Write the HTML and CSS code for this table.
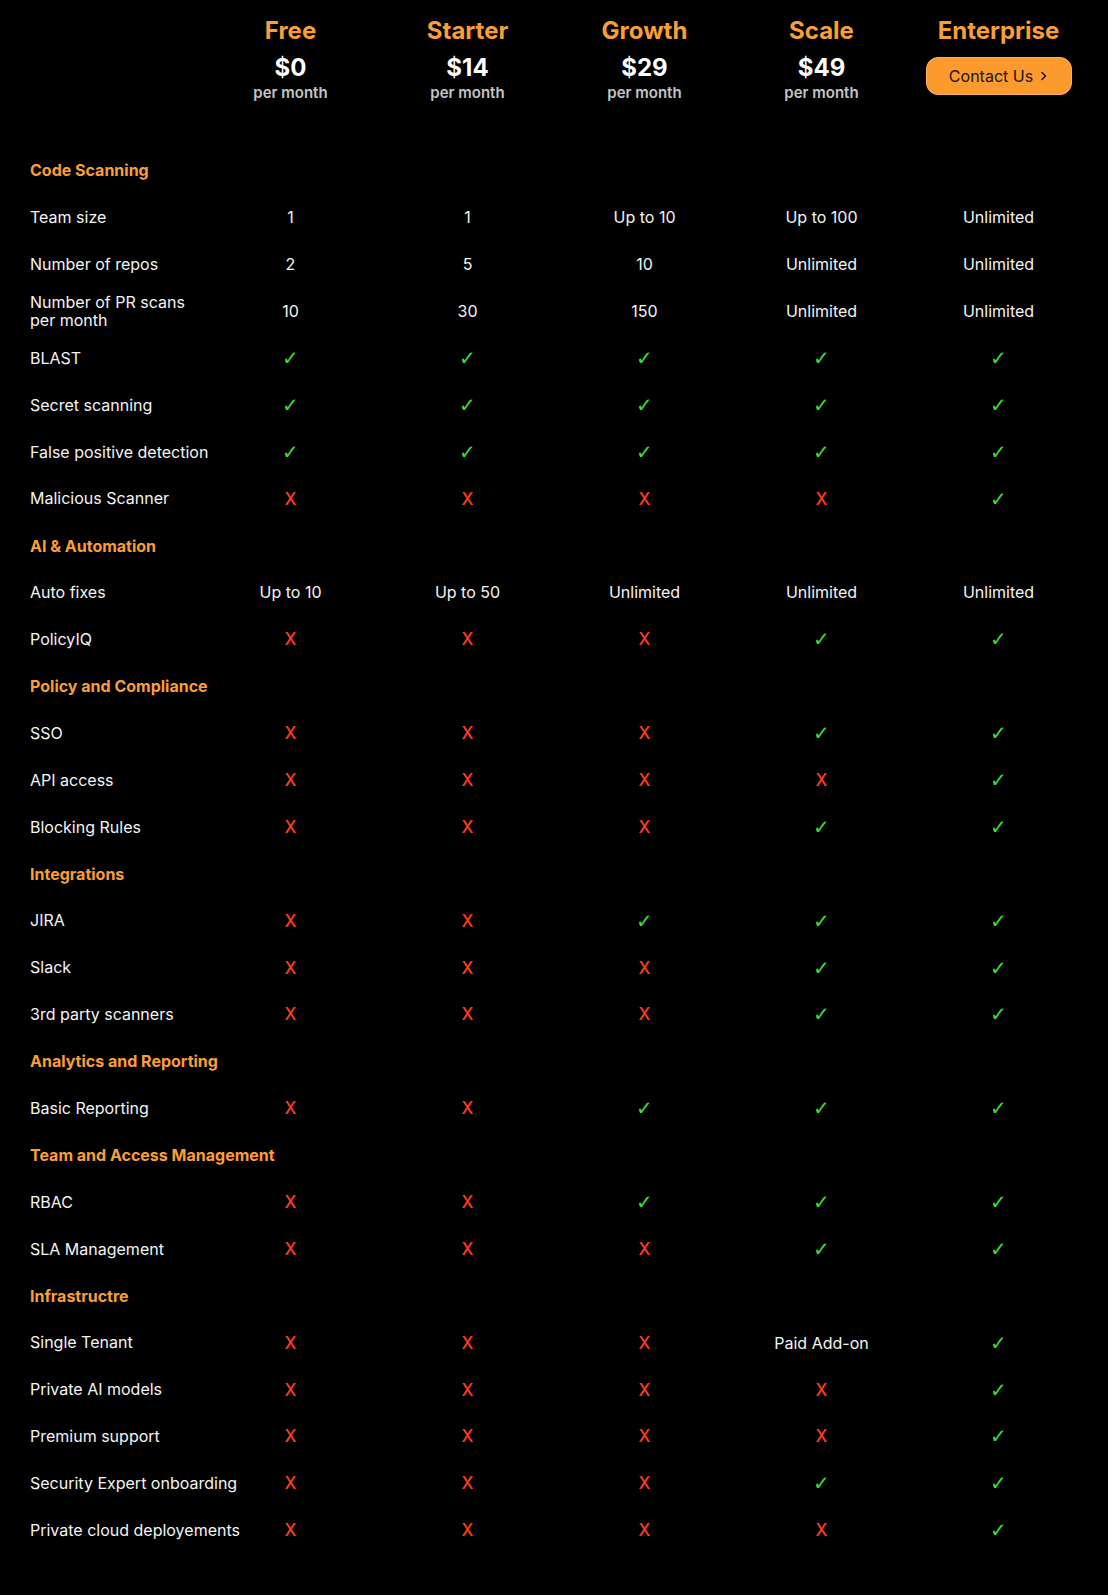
FILE: index.html
```html
<!DOCTYPE html>
<html lang="en">
<head>
<meta charset="utf-8">
<title>Pricing</title>
<link rel="stylesheet" href="styles.css">
</head>
<body>
<div class="page">
  <div class="grid head">
    <div class="hcell empty"></div>
    <div class="hcell"><div class="plan">Free</div><div class="price">$0</div><div class="per">per month</div></div>
    <div class="hcell"><div class="plan">Starter</div><div class="price">$14</div><div class="per">per month</div></div>
    <div class="hcell"><div class="plan">Growth</div><div class="price">$29</div><div class="per">per month</div></div>
    <div class="hcell"><div class="plan">Scale</div><div class="price">$49</div><div class="per">per month</div></div>
    <div class="hcell"><div class="plan">Enterprise</div><a class="btn" href="#">Contact Us <svg class="chev" width="8" height="10" viewBox="0 0 8 10"><path d="M2 1.5 L5.5 5 L2 8.5" fill="none" stroke="#1a1a1a" stroke-width="1.6" stroke-linecap="round" stroke-linejoin="round"/></svg></a></div>
  </div>

  <div class="grid body">
    <div class="sec">Code Scanning</div>
    <div class="lbl">Team size</div><div class="v">1</div><div class="v">1</div><div class="v">Up to 10</div><div class="v">Up to 100</div><div class="v">Unlimited</div>
    <div class="lbl">Number of repos</div><div class="v">2</div><div class="v">5</div><div class="v">10</div><div class="v">Unlimited</div><div class="v">Unlimited</div>
    <div class="lbl">Number of PR scans<br>per month</div><div class="v">10</div><div class="v">30</div><div class="v">150</div><div class="v">Unlimited</div><div class="v">Unlimited</div>
    <div class="lbl">BLAST</div><div class="v y">✓</div><div class="v y">✓</div><div class="v y">✓</div><div class="v y">✓</div><div class="v y">✓</div>
    <div class="lbl">Secret scanning</div><div class="v y">✓</div><div class="v y">✓</div><div class="v y">✓</div><div class="v y">✓</div><div class="v y">✓</div>
    <div class="lbl">False positive detection</div><div class="v y">✓</div><div class="v y">✓</div><div class="v y">✓</div><div class="v y">✓</div><div class="v y">✓</div>
    <div class="lbl">Malicious Scanner</div><div class="v n">X</div><div class="v n">X</div><div class="v n">X</div><div class="v n">X</div><div class="v y">✓</div>

    <div class="sec">AI &amp; Automation</div>
    <div class="lbl">Auto fixes</div><div class="v">Up to 10</div><div class="v">Up to 50</div><div class="v">Unlimited</div><div class="v">Unlimited</div><div class="v">Unlimited</div>
    <div class="lbl">PolicyIQ</div><div class="v n">X</div><div class="v n">X</div><div class="v n">X</div><div class="v y">✓</div><div class="v y">✓</div>

    <div class="sec">Policy and Compliance</div>
    <div class="lbl">SSO</div><div class="v n">X</div><div class="v n">X</div><div class="v n">X</div><div class="v y">✓</div><div class="v y">✓</div>
    <div class="lbl">API access</div><div class="v n">X</div><div class="v n">X</div><div class="v n">X</div><div class="v n">X</div><div class="v y">✓</div>
    <div class="lbl">Blocking Rules</div><div class="v n">X</div><div class="v n">X</div><div class="v n">X</div><div class="v y">✓</div><div class="v y">✓</div>

    <div class="sec">Integrations</div>
    <div class="lbl">JIRA</div><div class="v n">X</div><div class="v n">X</div><div class="v y">✓</div><div class="v y">✓</div><div class="v y">✓</div>
    <div class="lbl">Slack</div><div class="v n">X</div><div class="v n">X</div><div class="v n">X</div><div class="v y">✓</div><div class="v y">✓</div>
    <div class="lbl">3rd party scanners</div><div class="v n">X</div><div class="v n">X</div><div class="v n">X</div><div class="v y">✓</div><div class="v y">✓</div>

    <div class="sec">Analytics and Reporting</div>
    <div class="lbl">Basic Reporting</div><div class="v n">X</div><div class="v n">X</div><div class="v y">✓</div><div class="v y">✓</div><div class="v y">✓</div>

    <div class="sec">Team and Access Management</div>
    <div class="lbl">RBAC</div><div class="v n">X</div><div class="v n">X</div><div class="v y">✓</div><div class="v y">✓</div><div class="v y">✓</div>
    <div class="lbl">SLA Management</div><div class="v n">X</div><div class="v n">X</div><div class="v n">X</div><div class="v y">✓</div><div class="v y">✓</div>

    <div class="sec">Infrastructre</div>
    <div class="lbl">Single Tenant</div><div class="v n">X</div><div class="v n">X</div><div class="v n">X</div><div class="v">Paid Add-on</div><div class="v y">✓</div>
    <div class="lbl">Private AI models</div><div class="v n">X</div><div class="v n">X</div><div class="v n">X</div><div class="v n">X</div><div class="v y">✓</div>
    <div class="lbl">Premium support</div><div class="v n">X</div><div class="v n">X</div><div class="v n">X</div><div class="v n">X</div><div class="v y">✓</div>
    <div class="lbl">Security Expert onboarding</div><div class="v n">X</div><div class="v n">X</div><div class="v n">X</div><div class="v y">✓</div><div class="v y">✓</div>
    <div class="lbl">Private cloud deployements</div><div class="v n">X</div><div class="v n">X</div><div class="v n">X</div><div class="v n">X</div><div class="v y">✓</div>
  </div>
</div>
</body>
</html>
```

FILE: styles.css
```css
html, body {
  margin: 0;
  padding: 0;
  background: #000;
}
body {
  font-family: Inter, "Noto Sans", "Liberation Sans", sans-serif;
  color: #f2f2f2;
  min-height: 1595px;
}
.page {
  padding: 16px 0 40px 30px;
}
.grid {
  display: grid;
  grid-template-columns: 172px repeat(5, 177px);
}
.hcell {
  display: flex;
  flex-direction: column;
  align-items: center;
}
.plan {
  font-size: 24px;
  line-height: 30px;
  font-weight: 700;
  color: #f99f34;
}
.price {
  margin-top: 7px;
  font-size: 24px;
  line-height: 30px;
  font-weight: 700;
  color: #fff;
}
.per {
  font-size: 15px;
  line-height: 19px;
  font-weight: 600;
  color: #c4c4c4;
}
.btn {
  margin-top: 11px;
  box-sizing: border-box;
  width: 146px;
  height: 38px;
  border-radius: 12px;
  background: #fd9a2e;
  border: 1px solid #ffb15a;
  color: #161616;
  text-decoration: none;
  font-size: 16px;
  font-weight: 400;
  display: flex;
  align-items: center;
  justify-content: center;
  gap: 7px;
}
.chev {
  display: block;
}
.body {
  margin-top: 45px;
  grid-auto-rows: 46.9px;
}
.sec {
  grid-column: 1 / -1;
  display: flex;
  align-items: center;
  font-size: 16px;
  font-weight: 700;
  color: #f99f34;
}
.lbl {
  display: flex;
  align-items: center;
  font-size: 16px;
  line-height: 18.5px;
  white-space: nowrap;
  color: #f4f4f4;
}
.v {
  display: flex;
  align-items: center;
  justify-content: center;
  font-size: 16px;
  color: #f4f4f4;
}
.y {
  color: #3bdc35;
  font-family: "DejaVu Sans", sans-serif;
  font-size: 20px;
  line-height: 20px;
}
.n {
  color: #ff3c1c;
  font-size: 17px;
  font-weight: 500;
}
```
